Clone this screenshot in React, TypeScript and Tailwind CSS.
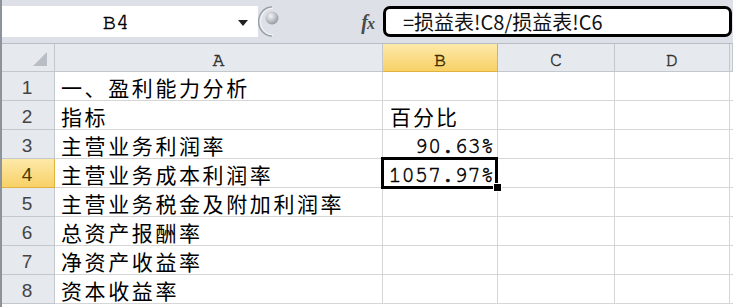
import React from "react";

const CJK = "font-['Noto_Sans_CJK_SC','Noto_Sans_CJK_JP',sans-serif]";
const MONO = "font-['FreeMono','Nimbus_Mono_PS',monospace] [-webkit-text-stroke:0.5px_currentColor]";

const rows = [
  { n: "1", a: "一、盈利能力分析", b: "" },
  { n: "2", a: "指标", b: "百分比" },
  { n: "3", a: "主营业务利润率", b: "90.63%" },
  { n: "4", a: "主营业务成本利润率", b: "1057.97%" },
  { n: "5", a: "主营业务税金及附加利润率", b: "" },
  { n: "6", a: "总资产报酬率", b: "" },
  { n: "7", a: "净资产收益率", b: "" },
  { n: "8", a: "资本收益率", b: "" },
];

function HeaderCell({ label, selected }: { label: string; selected?: boolean }) {
  return (
    <div
      className={
        "h-[28px] flex items-center justify-center border-r border-b text-[20px] pt-[4px] " +
        MONO +
        " " +
        (selected
          ? "bg-gradient-to-b from-[#fde9a8] to-[#f8d166] border-[#e2b240] text-[#3d2d00]"
          : "bg-[#e6e9ee] border-[#c3c8cf] text-[#333]")
      }
    >
      {label}
    </div>
  );
}

export default function App() {
  return (
    <div className="w-[733px] h-[307px] overflow-hidden bg-white relative">
      {/* left frame line */}
      <div className="absolute left-0 top-0 bottom-0 w-[2px] bg-[#8d939b] z-20" />
      {/* Formula bar */}
      <div className="h-[44px] bg-[#dde1e7] pt-[6px] flex flex-col">
        <div className="h-[31px] flex items-stretch">
          <div className="w-[258px] bg-white flex items-center relative">
            <div className={"w-[232px] text-center text-[22px] text-black pt-[2px] " + MONO}>B4</div>
            <svg width="12" height="8" viewBox="0 0 12 8" className="ml-[5px] mt-[2px]">
              <path d="M1 1 L11 1 L6 7 Z" fill="#222" />
            </svg>
          </div>
          <div className="w-[30px] flex items-center">
            <svg width="26" height="31" viewBox="0 0 26 31">
              <defs>
                <radialGradient id="knob" cx="40%" cy="35%" r="70%">
                  <stop offset="0%" stopColor="#f4f4f4" />
                  <stop offset="60%" stopColor="#b9bdc3" />
                  <stop offset="100%" stopColor="#8f949b" />
                </radialGradient>
              </defs>
              <path d="M14 1 A 13 14 0 0 0 14 30" fill="none" stroke="#9aa0a8" strokeWidth="1.5" />
              <path d="M15 2 A 12 13 0 0 0 15 29" fill="none" stroke="#f6f7f9" strokeWidth="1" />
              <circle cx="14" cy="12" r="6.5" fill="url(#knob)" />
            </svg>
          </div>
          <div className="w-[95px] flex items-center justify-end pr-[9px]">
            <span className="font-['Liberation_Serif','Times_New_Roman',serif] italic font-bold text-[20px] text-[#4a4a4a] tracking-[-1px]">
              f<span className="text-[16px]">x</span>
            </span>
          </div>
          <div className="flex-1 mr-[1px] border-[3px] border-black rounded-[7px] bg-white flex items-center pl-[17px]">
            <span className={CJK + " text-[20px] text-[#111] leading-none"}>=损益表!C8/损益表!C6</span>
          </div>
        </div>
        <div className="flex-1 border-b border-[#b8bec6]" />
      </div>

      {/* Grid */}
      <div className="grid grid-cols-[55px_328px_115px_117px_115px_1fr]">
        <div className="h-[28px] bg-[#e6e9ee] border-r border-b border-[#c3c8cf] relative">
          <svg width="16" height="16" viewBox="0 0 16 16" className="absolute right-[6px] bottom-[4px]">
            <path d="M15 1 L15 15 L1 15 Z" fill="#b9bdc4" />
          </svg>
        </div>
        <HeaderCell label="A" />
        <HeaderCell label="B" selected />
        <HeaderCell label="C" />
        <HeaderCell label="D" />
        <HeaderCell label="" />

        {rows.map((r) => {
          const sel = r.n === "4";
          const isNum = /%$/.test(r.b);
          return (
            <React.Fragment key={r.n}>
              <div
                className={
                  "h-[29px] flex items-center justify-center border-r border-b font-['Liberation_Sans',Arial,sans-serif] text-[19px] pt-[4px] " +
                  (sel
                    ? "bg-gradient-to-b from-[#fde9a8] to-[#f8d166] border-[#e2b240] text-[#4a3a00]"
                    : "bg-[#e6e9ee] border-[#c3c8cf] text-[#444]")
                }
              >
                {r.n}
              </div>
              <div className="h-[29px] border-r border-b border-[#d6d6d6] flex items-center pl-[6px] pt-[3px] overflow-hidden whitespace-nowrap">
                <span className={CJK + " text-[21px] tracking-[2.6px] text-black leading-none"}>{r.a}</span>
              </div>
              <div
                className={
                  "h-[29px] border-r border-b border-[#d6d6d6] flex items-center relative whitespace-nowrap " +
                  (isNum ? "justify-end pr-[3px] pt-[4px]" : "pl-[7px] pt-[3px]")
                }
              >
                {isNum ? (
                  <span className={MONO + " text-[22px] text-black leading-none"}>{r.b}</span>
                ) : (
                  <span className={CJK + " text-[21px] tracking-[2px] text-black leading-none"}>{r.b}</span>
                )}
                {sel && (
                  <>
                    <div className="absolute top-[-2px] left-[-2px] right-[-1px] bottom-[-2px] border-[3px] border-black pointer-events-none" />
                    <div className="absolute right-[-5px] bottom-[-5px] w-[9px] h-[9px] bg-black border border-white z-10" />
                  </>
                )}
              </div>
              <div className="h-[29px] border-r border-b border-[#d6d6d6]" />
              <div className="h-[29px] border-r border-b border-[#d6d6d6]" />
              <div className="h-[29px] border-b border-[#d6d6d6]" />
            </React.Fragment>
          );
        })}
      </div>
    </div>
  );
}
